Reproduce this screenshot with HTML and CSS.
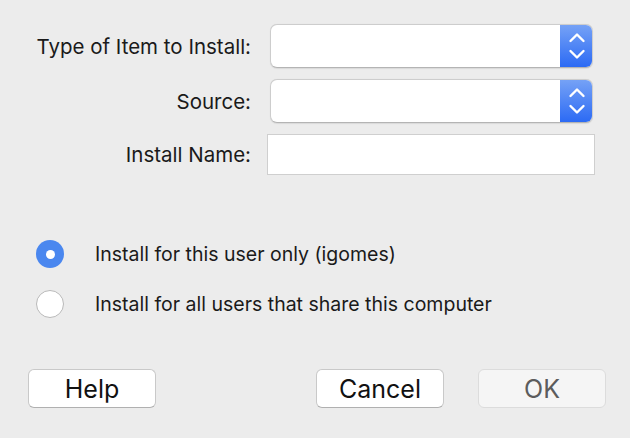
FILE: index.html
```html
<!DOCTYPE html>
<html>
<head>
<meta charset="utf-8">
<link rel="stylesheet" href="styles.css">
</head>
<body>
<div class="dialog">
  <div class="form">
    <label class="label">Type of Item to Install:</label>
    <div class="popup"><div class="popup-field"></div><div class="stepper">
      <svg width="18" height="28" viewBox="0 0 18 28"><path d="M2.5 9 L9 2.5 L15.5 9" fill="none" stroke="#fff" stroke-width="2.4" stroke-linecap="round" stroke-linejoin="round"/><path d="M2.5 19 L9 25.5 L15.5 19" fill="none" stroke="#fff" stroke-width="2.4" stroke-linecap="round" stroke-linejoin="round"/></svg>
    </div></div>
    <label class="label">Source:</label>
    <div class="popup"><div class="popup-field"></div><div class="stepper">
      <svg width="18" height="28" viewBox="0 0 18 28"><path d="M2.5 9 L9 2.5 L15.5 9" fill="none" stroke="#fff" stroke-width="2.4" stroke-linecap="round" stroke-linejoin="round"/><path d="M2.5 19 L9 25.5 L15.5 19" fill="none" stroke="#fff" stroke-width="2.4" stroke-linecap="round" stroke-linejoin="round"/></svg>
    </div></div>
    <label class="label">Install Name:</label>
    <div class="textfield"></div>
  </div>
  <div class="options">
    <div class="option"><span class="radio radio-on"><span class="dot"></span></span><span class="option-text">Install for this user only (igomes)</span></div>
    <div class="option"><span class="radio"></span><span class="option-text">Install for all users that share this computer</span></div>
  </div>
  <div class="buttons">
    <button class="btn">Help</button>
    <div class="btn-group">
      <button class="btn">Cancel</button>
      <button class="btn btn-disabled">OK</button>
    </div>
  </div>
</div>
</body>
</html>
```
FILE: styles.css
```css
html, body {
  margin: 0;
  padding: 0;
  background: #ececec;
}
body {
  width: 630px;
  height: 438px;
  overflow: hidden;
  font-family: Inter, "Liberation Sans", sans-serif;
  color: #1a1a1a;
}
.dialog {
  padding-top: 24px;
}
.form {
  display: grid;
  grid-template-columns: 251px 323px;
  column-gap: 19px;
  row-gap: 11px;
  align-items: center;
}
.label {
  text-align: right;
  font-size: 20.5px;
}
.popup {
  height: 44px;
  display: flex;
  box-sizing: border-box;
  border-radius: 7px;
  background: #fff;
  border: 1px solid #cdcdcd;
  border-bottom-color: #b4b4b4;
  box-shadow: 0 0.5px 1px rgba(0,0,0,0.08);
  overflow: hidden;
}
.popup-field {
  flex: 1;
}
.stepper {
  width: 33px;
  margin: -1px -1px -1px 0;
  background: linear-gradient(#77a3f6, #2a69f4);
  display: flex;
  align-items: center;
  justify-content: center;
}
.textfield {
  margin-left: -3px;
  width: 328px;
  height: 41px;
  box-sizing: border-box;
  background: #fff;
  border: 1px solid #cfcfcf;
}
.options {
  margin-top: 65px;
  padding-left: 36px;
  display: flex;
  flex-direction: column;
  gap: 22px;
}
.option {
  display: flex;
  align-items: center;
  gap: 31px;
  height: 28px;
}
.radio {
  width: 28px;
  height: 28px;
  box-sizing: border-box;
  border-radius: 50%;
  background: #fff;
  border: 1px solid #b9b9b9;
  display: flex;
  align-items: center;
  justify-content: center;
  flex: none;
}
.radio-on {
  border: none;
  background: #4a87ef;
}
.dot {
  width: 9px;
  height: 9px;
  border-radius: 50%;
  background: #fff;
}
.option-text {
  font-size: 19.5px;
}
.buttons {
  margin-top: 51px;
  padding: 0 24px 0 28px;
  display: flex;
  justify-content: space-between;
}
.btn-group {
  display: flex;
  gap: 34px;
}
.btn {
  width: 128px;
  height: 39px;
  box-sizing: border-box;
  border-radius: 6px;
  background: #fff;
  border: 1px solid #c9c9c9;
  border-bottom-color: #b0b0b0;
  font-family: Inter, "Liberation Sans", sans-serif;
  font-size: 25px;
  color: #111;
  padding: 0;
}
.btn-disabled {
  background: #f5f5f5;
  border-color: #dcdcdc;
  color: #5c5c5c;
}
```
